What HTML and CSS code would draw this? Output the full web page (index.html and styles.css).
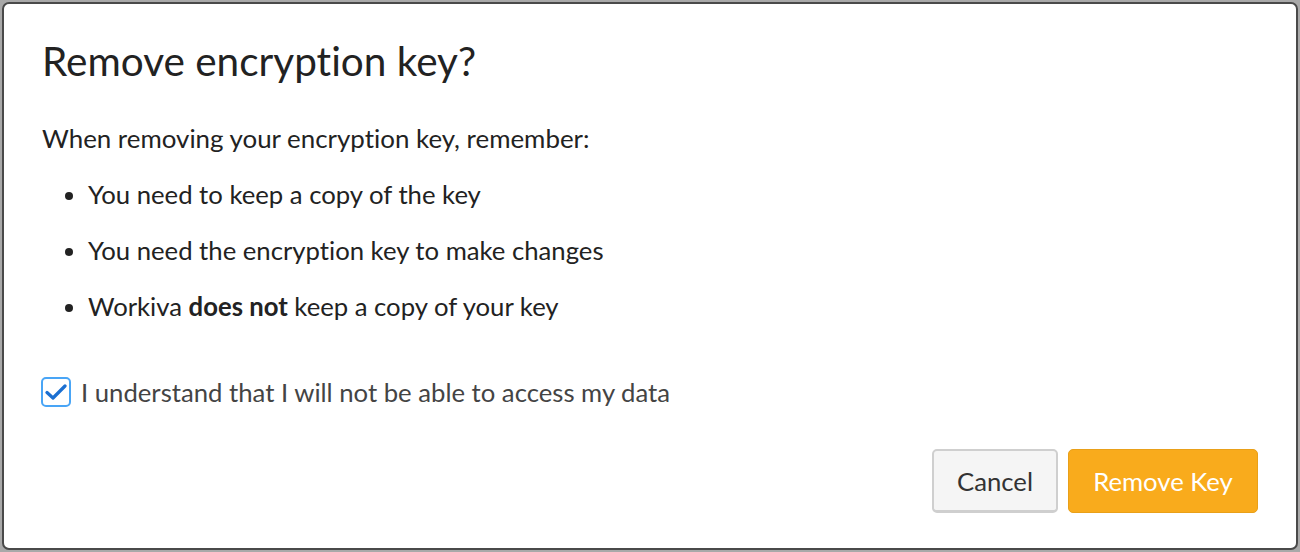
FILE: index.html
```html
<!DOCTYPE html>
<html lang="en">
<head>
  <meta charset="UTF-8">
  <title>Remove encryption key?</title>
  <link rel="stylesheet" href="styles.css">
</head>
<body>

  <div class="modal">
    <h2>Remove encryption key?</h2>

    <p class="intro">When removing your encryption key, remember:</p>
    <ul class="notes">
      <li>You need to keep a copy of the key</li>
      <li>You need the encryption key to make changes</li>
      <li>Workiva <strong>does not</strong> keep a copy of your key</li>
    </ul>

    <label class="confirm">
      <span class="check">
        <svg width="22" height="18" viewBox="0 0 22 18"><path d="M2 9.5 L8 15 L20 3" fill="none" stroke="#1b6fd1" stroke-width="3.2" stroke-linecap="round" stroke-linejoin="round"/></svg>
      </span>
      I understand that I will not be able to access my data
    </label>

    <div class="actions">
      <button class="btn btn-cancel">Cancel</button>
      <button class="btn btn-danger">Remove Key</button>
    </div>
  </div>

</body>
</html>
```

FILE: styles.css
```css
body {
  margin: 0;
  padding: 2px;
  background: #a9a9a9;
  font-family: Lato, 'Open Sans', sans-serif;
  font-variant-ligatures: no-common-ligatures;
}

.modal {
  box-sizing: border-box;
  width: 1296px;
  height: 548px;
  background: #fff;
  border: 2px solid #4a4a4a;
  border-radius: 7px;
  padding: 30px 38px 0 38px;
  color: #222;
}

h2 {
  margin: 0;
  font-size: 40.5px;
  font-weight: 400;
  line-height: 54px;
}

.intro {
  margin: 33px 0 0;
  font-size: 25.9px;
  line-height: 34px;
}

.notes {
  margin: 0;
  padding: 0 0 0 46px;
  font-size: 25.7px;
}

.notes li {
  margin-top: 22px;
  line-height: 34px;
}

.notes strong {
  font-weight: 700;
}

.confirm {
  display: flex;
  align-items: center;
  gap: 10px;
  margin-top: 52px;
  font-size: 25.7px;
  color: #444;
  line-height: 34px;
}

.check {
  box-sizing: border-box;
  width: 30px;
  height: 30px;
  margin-left: -1px;
  border: 2px solid #49a5f6;
  border-radius: 5px;
  display: flex;
  align-items: center;
  justify-content: center;
}

.actions {
  display: flex;
  justify-content: flex-end;
  gap: 10px;
  margin-top: 40px;
}

.btn {
  font-family: inherit;
  font-size: 25.7px;
  height: 64px;
  padding: 0 24px;
  border-radius: 5px;
  cursor: pointer;
}

.btn-cancel {
  background: #f5f5f5;
  color: #333;
  border: 2px solid #cfcfcf;
  border-bottom-width: 3px;
  padding: 0 23px;
}

.btn-danger {
  background: #f9ab1c;
  color: #fff;
  border: 1px solid #e9a019;
  min-width: 190px;
}
```
